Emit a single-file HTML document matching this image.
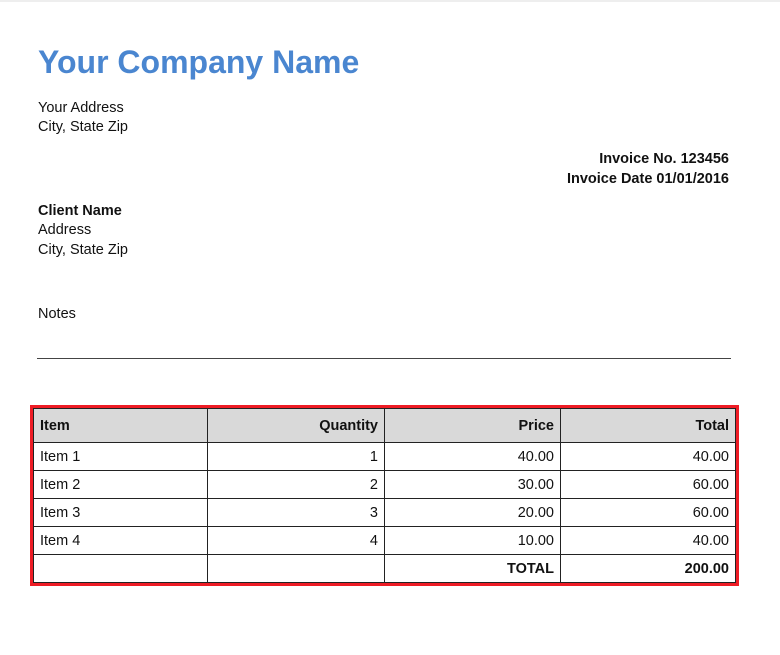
<!DOCTYPE html><html><head><style>
body{margin:0;width:780px;height:655px;background:#fff;font-family:"Liberation Sans",sans-serif;color:#111;position:relative;overflow:hidden}
.a{position:absolute;font-size:14.5px;white-space:nowrap}
.b{font-weight:bold}
table{position:absolute;left:33px;top:408px;width:703px;border-collapse:collapse;font-size:14.5px}
td{border:1px solid #222;padding:0 6px;height:27px}
tr.h td{background:#d9d9d9;font-weight:bold;height:33px}
td.r{text-align:right}
</style></head><body>
<div style="position:absolute;left:0;top:0;width:780px;height:2px;background:#eee"></div>
<div class="a b" style="left:38px;top:44px;font-size:32px;color:#4a86d0">Your Company Name</div>
<div class="a" style="left:38px;top:100px">Your Address</div>
<div class="a" style="left:38px;top:119px">City, State Zip</div>
<div class="a b" style="right:51px;top:151px">Invoice No. 123456</div>
<div class="a b" style="right:51px;top:171px">Invoice Date 01/01/2016</div>
<div class="a b" style="left:38px;top:203px">Client Name</div>
<div class="a" style="left:38px;top:222px">Address</div>
<div class="a" style="left:38px;top:242px">City, State Zip</div>
<div class="a" style="left:38px;top:306px">Notes</div>
<div style="position:absolute;left:37px;top:358px;width:694px;height:1px;background:#444"></div>
<div style="position:absolute;left:30px;top:405px;width:703px;height:175px;border:3px solid #ee1c25"></div>
<table>
<tr class="h"><td style="width:161px">Item</td><td class="r" style="width:164px">Quantity</td><td class="r" style="width:163px">Price</td><td class="r">Total</td></tr>
<tr><td>Item 1</td><td class="r">1</td><td class="r">40.00</td><td class="r">40.00</td></tr>
<tr><td>Item 2</td><td class="r">2</td><td class="r">30.00</td><td class="r">60.00</td></tr>
<tr><td>Item 3</td><td class="r">3</td><td class="r">20.00</td><td class="r">60.00</td></tr>
<tr><td>Item 4</td><td class="r">4</td><td class="r">10.00</td><td class="r">40.00</td></tr>
<tr><td></td><td></td><td class="r b">TOTAL</td><td class="r b">200.00</td></tr>
</table>
</body></html>
